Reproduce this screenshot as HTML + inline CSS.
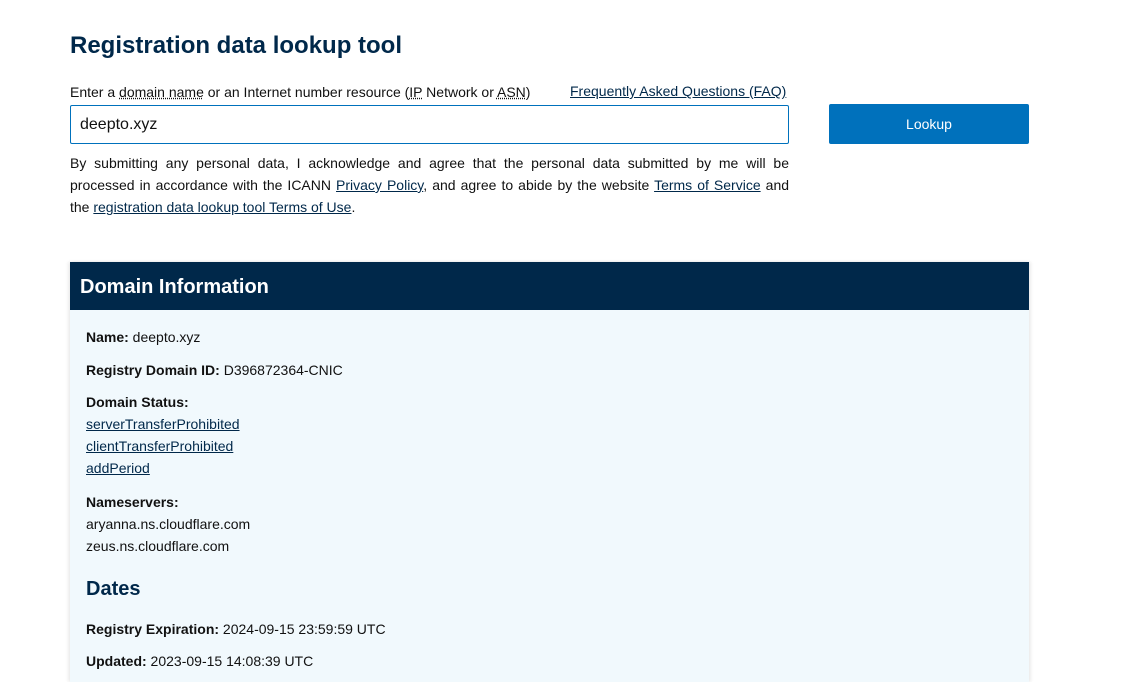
<!DOCTYPE html>
<html><head><meta charset="utf-8"><style>
body{margin:0;background:#fff;font-family:"Liberation Sans",sans-serif;color:#111;font-size:14px;}
h1{position:absolute;left:70px;top:32px;margin:0;font-size:24px;color:#00284a;font-weight:bold;}
.lbl{position:absolute;left:70px;top:84px;font-size:14px;}
.lbl u{text-decoration:underline dotted;}
.faq{position:absolute;left:570px;top:83px;color:#00284a;text-decoration:underline;}
.inp{position:absolute;left:70px;top:105px;border:1px solid #0071bc;border-radius:2px;box-sizing:border-box;width:719px;height:39px;padding:0 9px;line-height:37px;font-size:16px;}
.btn{position:absolute;left:829px;top:104px;width:200px;height:40px;background:#0071bc;border-radius:2px;color:#fff;text-align:center;line-height:40px;font-size:14px;}
.disc{position:absolute;left:70px;top:152px;width:719px;text-align:justify;line-height:22px;}
a{color:#00284a;text-decoration:underline;}
.panel{position:absolute;left:70px;top:262px;width:959px;height:420px;background:#f1f9fd;box-shadow:-2px 0 3px rgba(0,0,0,0.08),2px 0 3px rgba(0,0,0,0.08);}
.hd{height:48px;background:#00284a;color:#fff;font-weight:bold;font-size:20px;line-height:50px;padding-left:10px;}
.t{position:absolute;left:16px;line-height:22px;}
.dates{position:absolute;left:16px;font-size:20px;font-weight:bold;color:#00284a;}
</style></head><body>
<h1>Registration data lookup tool</h1>
<div class="lbl">Enter a <u>domain name</u> or an Internet number resource (<u>IP</u> Network or <u>ASN</u>)</div>
<a class="faq">Frequently Asked Questions (FAQ)</a>
<div class="inp">deepto.xyz</div>
<div class="btn">Lookup</div>
<div class="disc">By submitting any personal data, I acknowledge and agree that the personal data submitted by me will be processed in accordance with the ICANN <a>Privacy Policy</a>, and agree to abide by the website <a>Terms of Service</a> and the <a>registration data lookup tool Terms of Use</a>.</div>
<div class="panel">
<div class="hd">Domain Information</div>
<div class="t" style="top:64px"><b>Name:</b> deepto.xyz</div>
<div class="t" style="top:97px"><b>Registry Domain ID:</b> D396872364-CNIC</div>
<div class="t" style="top:129px"><b>Domain Status:</b><br><a>serverTransferProhibited</a><br><a>clientTransferProhibited</a><br><a>addPeriod</a></div>
<div class="t" style="top:229px"><b>Nameservers:</b><br>aryanna.ns.cloudflare.com<br>zeus.ns.cloudflare.com</div>
<div class="dates" style="top:316px">Dates</div>
<div class="t" style="top:356px"><b>Registry Expiration:</b> 2024-09-15 23:59:59 UTC</div>
<div class="t" style="top:388px"><b>Updated:</b> 2023-09-15 14:08:39 UTC</div>
</div>
</body></html>
